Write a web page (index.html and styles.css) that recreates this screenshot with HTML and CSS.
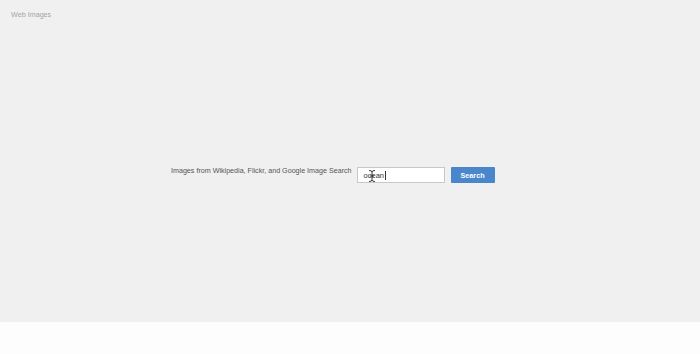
FILE: index.html
```html
<!DOCTYPE html>
<html lang="en">

<head>
    <meta charset="UTF-8">
    <title>Web Images</title>
    <link rel="stylesheet" href="styles.css">
</head>

<body>
    <div class="page">
        <div class="brand">Web Images</div>
        <div class="search-row">
            <span class="search-label">Images from Wikipedia, Flickr, and Google Image Search</span>
            <div class="search-input">
                <span class="query">ocean</span><span class="caret"></span>
                <svg class="pointer" width="12" height="14" viewBox="0 0 12 14">
                    <path d="M3 1.5 Q6 1.5 6 3 Q6 1.5 9 1.5 M6 3 V11 M3 12.5 Q6 12.5 6 11 Q6 12.5 9 12.5 M4 7 H8" fill="none" stroke="#222" stroke-width="0.9"/>
                </svg>
            </div>
            <button class="search-btn">Search</button>
        </div>
    </div>
    <div class="footer"></div>
</body>

</html>
```

FILE: styles.css
```css
body {
    font-family: "Liberation Sans", Arial, sans-serif;
    margin: 0;
    padding: 0;
    background-color: #fdfdfd;
}

.page {
    height: 322px;
    background-color: #f0f0f0;
    position: relative;
    box-sizing: border-box;
    padding: 10px 11px;
}

.brand {
    font-size: 7.2px;
    color: #a2a6aa;
}

.search-row {
    display: flex;
    align-items: center;
    margin-top: 148px;
    margin-left: 160px;
}

.search-label {
    font-size: 7.15px;
    color: #555;
    margin-right: 5px;
    margin-top: -8px;
}

.search-input {
    position: relative;
    width: 88px;
    height: 16px;
    box-sizing: border-box;
    border: 1px solid #c8c8c8;
    background-color: #fff;
    display: flex;
    align-items: center;
    padding-left: 6px;
    font-size: 7.5px;
    color: #333;
}

.caret {
    width: 1px;
    height: 9px;
    background-color: #333;
    margin-left: 1px;
}

.pointer {
    position: absolute;
    left: 8px;
    top: 1px;
}

.search-btn {
    margin-left: 6px;
    width: 44px;
    height: 16px;
    border: none;
    border-radius: 1px;
    background-color: #4a86cb;
    color: #fff;
    font-family: "Liberation Sans", Arial, sans-serif;
    font-size: 7.2px;
    font-weight: bold;
    padding: 0;
}

.footer {
    height: 32px;
}
```
